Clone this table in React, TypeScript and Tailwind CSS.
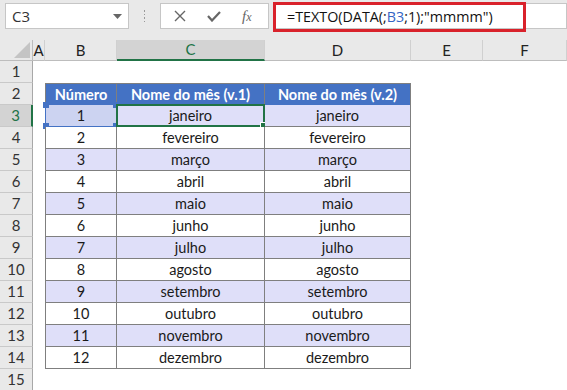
import React from "react";

const meses = [
  "janeiro",
  "fevereiro",
  "março",
  "abril",
  "maio",
  "junho",
  "julho",
  "agosto",
  "setembro",
  "outubro",
  "novembro",
  "dezembro",
];

const colunas = ["A", "B", "C", "D", "E", "F"];

const ColHeader = ({ letra }: { letra: string }) => {
  const ativa = letra === "C";
  return (
    <div
      className={
        "flex items-center justify-center border-r border-[#d0d0d0] text-[15px] " +
        (ativa
          ? "bg-[#d3d3d3] text-[#217346] border-b-2 border-b-[#217346]"
          : "bg-[#e9e9e9] text-[#222] border-b border-b-[#bdbdbd]")
      }
    >
      {letra}
    </div>
  );
};

const RowHeader = ({ n }: { n: number }) => {
  const ativa = n === 3;
  return (
    <div
      className={
        "flex items-center justify-center border-b border-[#c9c9c9] text-[15px] " +
        (ativa
          ? "bg-[#d3d3d3] text-[#217346] border-r-2 border-r-[#217346]"
          : "bg-[#e9e9e9] text-[#333] border-r border-r-[#a8a8a8]")
      }
    >
      {n}
    </div>
  );
};

const Cell = ({
  children,
  cls = "",
  extra,
}: {
  children?: React.ReactNode;
  cls?: string;
  extra?: React.ReactNode;
}) => (
  <div className={"relative flex items-center justify-center text-[14.5px] " + cls}>
    {children}
    {extra}
  </div>
);

export default function App() {
  const rows: React.ReactNode[] = [];

  for (let r = 1; r <= 15; r++) {
    rows.push(<RowHeader key={"h" + r} n={r} />);
    // coluna A
    rows.push(<Cell key={"a" + r} />);

    if (r === 2) {
      const th = "bg-[#4472c4] text-white font-bold border-r border-t border-[#7f7f7f]";
      rows.push(<Cell key="b2" cls={th + " border-l"}>Número</Cell>);
      rows.push(<Cell key="c2" cls={th}>Nome do mês (v.1)</Cell>);
      rows.push(<Cell key="d2" cls={th}>Nome do mês (v.2)</Cell>);
    } else if (r >= 3 && r <= 14) {
      const i = r - 3;
      const faixa = i % 2 === 0 ? "bg-[#dfdff9]" : "bg-white";
      const td = "text-[#1a1a1a] border-r border-b border-[#7f7f7f] " + faixa;
      rows.push(
        <Cell
          key={"b" + r}
          cls={td + " border-l" + (r === 3 ? " !bg-[#ccd3f1]" : "")}
          extra={
            r === 3 ? (
              <div className="absolute -inset-[1px] border-[1.5px] border-[#4472c4]">
                <span className="absolute -left-[3px] -top-[3px] w-[6px] h-[6px] bg-[#4472c4]" />
                <span className="absolute -right-[3px] -top-[3px] w-[6px] h-[6px] bg-[#4472c4]" />
                <span className="absolute -left-[3px] -bottom-[3px] w-[6px] h-[6px] bg-[#4472c4]" />
                <span className="absolute -right-[3px] -bottom-[3px] w-[6px] h-[6px] bg-[#4472c4]" />
              </div>
            ) : null
          }
        >
          {i + 1}
        </Cell>
      );
      rows.push(
        <Cell
          key={"c" + r}
          cls={td}
          extra={
            r === 3 ? (
              <div className="absolute -left-[1px] -top-[1px] -right-[1px] -bottom-[1px] border-2 border-[#217346]">
                <span className="absolute -right-[4px] -bottom-[4px] w-[6px] h-[6px] bg-[#217346] outline outline-1 outline-white" />
              </div>
            ) : null
          }
        >
          {meses[i]}
        </Cell>
      );
      rows.push(<Cell key={"d" + r} cls={td}>{meses[i]}</Cell>);
    } else {
      rows.push(<Cell key={"b" + r} />);
      rows.push(<Cell key={"c" + r} />);
      rows.push(<Cell key={"d" + r} />);
    }
    rows.push(<Cell key={"e" + r} />);
    rows.push(<Cell key={"f" + r} />);
  }

  return (
    <div
      className="w-[567px] h-[390px] overflow-hidden bg-white text-[#222]"
      style={{ fontFamily: "Lato, 'Liberation Sans', sans-serif" }}
    >
      {/* barra de fórmulas */}
      <div className="h-[40px] bg-[#e9e9e9] flex items-start pt-[3px]">
        <div className="ml-[5px] w-[124px] h-[26px] bg-white border border-[#c6c6c6] flex items-center justify-between pl-[6px] pr-[6px] text-[15px] text-[#333]" style={{ fontFamily: "'Open Sans', 'Liberation Sans', sans-serif" }}>
          <span>C3</span>
          <svg width="9" height="5" viewBox="0 0 9 5">
            <polygon points="0,0 9,0 4.5,5" fill="#666" />
          </svg>
        </div>
        <div className="w-[31px] h-[26px] flex flex-col items-center justify-center gap-[2px]">
          <span className="w-[1.5px] h-[1.5px] bg-[#999]" />
          <span className="w-[1.5px] h-[1.5px] bg-[#999]" />
          <span className="w-[1.5px] h-[1.5px] bg-[#999]" />
          <span className="w-[1.5px] h-[1.5px] bg-[#999]" />
        </div>
        <div className="w-[109px] h-[26px] bg-white border border-[#c6c6c6] flex items-center pl-[13px] gap-[21px]">
          <svg width="12" height="12" viewBox="0 0 12 12">
            <path d="M1 1 L11 11 M11 1 L1 11" stroke="#666" strokeWidth="1.4" fill="none" />
          </svg>
          <svg width="14" height="11" viewBox="0 0 14 11">
            <path d="M1 5 L5 9.5 L13 1" stroke="#666" strokeWidth="2.2" fill="none" />
          </svg>
          <span className="italic text-[15px] text-[#666]" style={{ fontFamily: "'Liberation Serif', serif" }}>
            f<span className="text-[12px]">x</span>
          </span>
        </div>
        <div className="ml-[4px] flex-1 h-[26px] bg-white border border-[#c6c6c6] relative">
          <div className="absolute -left-[1px] -top-[2px] w-[253px] h-[30px] border-[3px] border-[#d9222b] flex items-center pl-[11px] text-[14.3px] text-[#111]" style={{ fontFamily: "'Open Sans', 'Liberation Sans', sans-serif" }}>
            =TEXTO(DATA(;<span className="text-[#3465c5]">B3</span>;1);"mmmm")
          </div>
        </div>
      </div>

      {/* planilha */}
      <div className="grid grid-cols-[33px_12px_72px_148px_146px_72px_1fr] grid-rows-[21px_repeat(15,22px)]">
        <div className="bg-[#e9e9e9] border-r border-b border-[#bdbdbd] flex items-end justify-end pr-[2px] pb-[2px]">
          <svg width="16" height="16" viewBox="0 0 16 16">
            <polygon points="16,0 16,16 0,16" fill="#c4c4c4" />
          </svg>
        </div>
        {colunas.map((c) => (
          <ColHeader key={c} letra={c} />
        ))}
        {rows}
      </div>
    </div>
  );
}
